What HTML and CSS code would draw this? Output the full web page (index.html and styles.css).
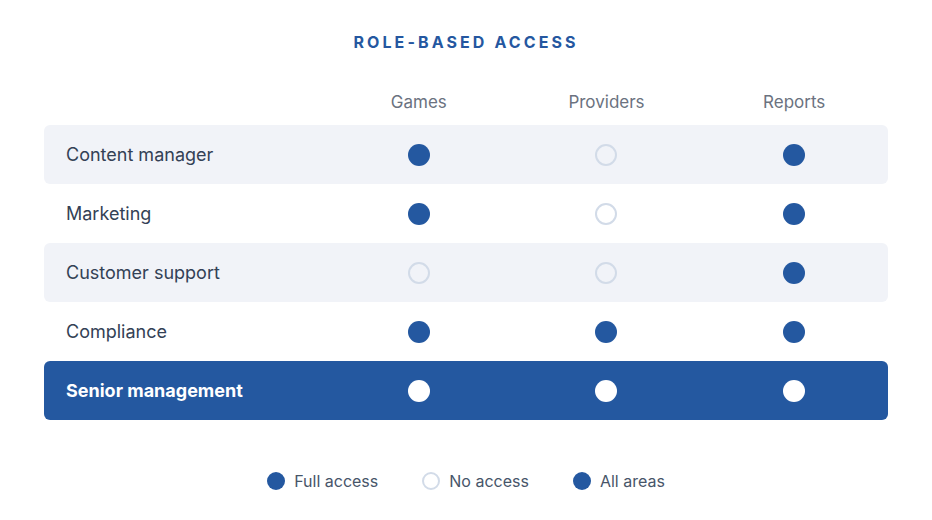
FILE: index.html
```html
<!DOCTYPE html>
<html>
<head>
<meta charset="utf-8">
<link rel="stylesheet" href="styles.css">
</head>
<body>
<div class="page">
  <h1 class="title">ROLE-BASED ACCESS</h1>
  <div class="table">
    <div class="row head">
      <div class="label"></div>
      <div class="cell">Games</div>
      <div class="cell">Providers</div>
      <div class="cell">Reports</div>
    </div>
    <div class="row shaded">
      <div class="label">Content manager</div>
      <div class="cell"><span class="dot full"></span></div>
      <div class="cell"><span class="dot none"></span></div>
      <div class="cell"><span class="dot full"></span></div>
    </div>
    <div class="row">
      <div class="label">Marketing</div>
      <div class="cell"><span class="dot full"></span></div>
      <div class="cell"><span class="dot none"></span></div>
      <div class="cell"><span class="dot full"></span></div>
    </div>
    <div class="row shaded">
      <div class="label">Customer support</div>
      <div class="cell"><span class="dot none"></span></div>
      <div class="cell"><span class="dot none"></span></div>
      <div class="cell"><span class="dot full"></span></div>
    </div>
    <div class="row">
      <div class="label">Compliance</div>
      <div class="cell"><span class="dot full"></span></div>
      <div class="cell"><span class="dot full"></span></div>
      <div class="cell"><span class="dot full"></span></div>
    </div>
    <div class="row highlight">
      <div class="label">Senior management</div>
      <div class="cell"><span class="dot white"></span></div>
      <div class="cell"><span class="dot white"></span></div>
      <div class="cell"><span class="dot white"></span></div>
    </div>
  </div>
  <div class="legend">
    <div class="item"><span class="ldot full"></span>Full access</div>
    <div class="item"><span class="ldot none"></span>No access</div>
    <div class="item"><span class="ldot full"></span>All areas</div>
  </div>
</div>
</body>
</html>
```
FILE: styles.css
```css
* { box-sizing: border-box; }
html, body { margin: 0; padding: 0; background: #ffffff; }
body { font-family: Inter, "Noto Sans", sans-serif; color: #334155; }
.page { width: 932px; height: 520px; padding: 32px 44px 0; }
.title {
  margin: 0;
  text-align: center;
  font-size: 16px;
  line-height: 20px;
  font-weight: 700;
  letter-spacing: 3.1px;
  color: #2557a0;
}
.table { margin-top: 40px; display: flex; flex-direction: column; }
.row {
  display: grid;
  grid-template-columns: 281px 1fr 1fr 1fr;
  align-items: center;
  height: 59px;
  border-radius: 6px;
}
.row.head { height: 20px; margin-bottom: 13px; }
.row.head .cell { font-size: 17px; color: #6b7280; line-height: 20px; }
.row.shaded { background: #f1f3f8; }
.row.highlight { background: #2458a0; }
.label { padding-left: 22px; font-size: 18px; color: #334155; }
.highlight .label { color: #ffffff; font-weight: 700; }
.cell { display: flex; justify-content: center; align-items: center; }
.dot { width: 22px; height: 22px; border-radius: 50%; display: block; }
.full { background: #2458a0; }
.none { border: 2px solid #d2dbe8; background: transparent; }
.white { background: #ffffff; }
.legend {
  margin-top: 51px;
  display: flex;
  justify-content: center;
  gap: 44px;
  font-size: 16px;
  color: #475569;
}
.item { display: flex; align-items: center; gap: 9px; line-height: 20px; }
.ldot { width: 18px; height: 18px; border-radius: 50%; display: block; }
```
